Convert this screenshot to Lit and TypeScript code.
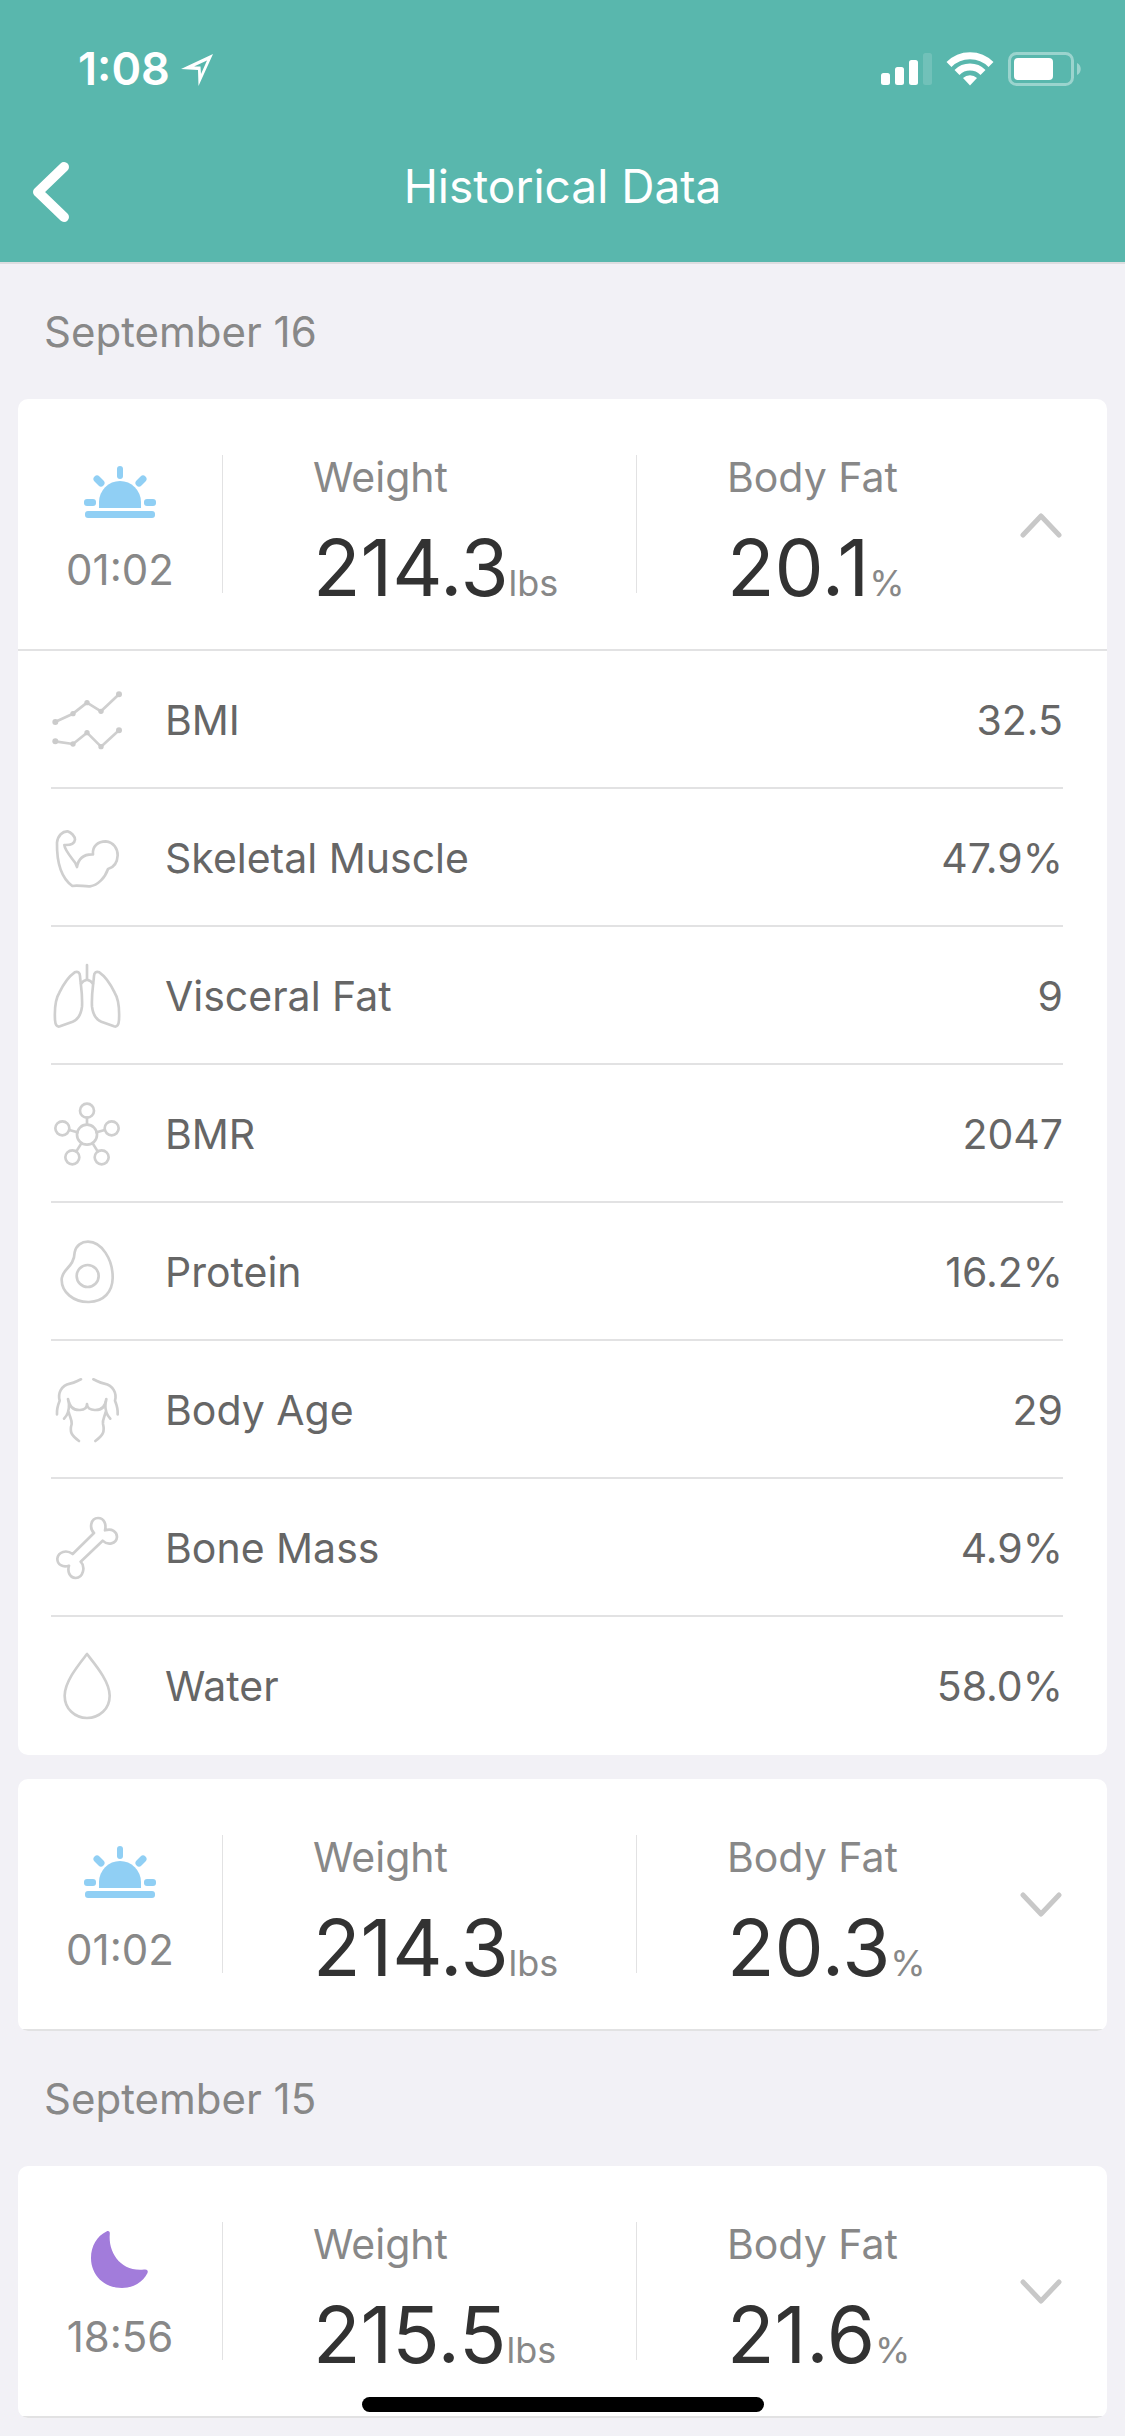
import { LitElement, html, svg, css, nothing, type SVGTemplateResult } from "lit";
import { customElement, property, state } from "lit/decorators.js";

interface Detail {
  icon: string;
  label: string;
  value: string;
}

interface Reading {
  time: string;
  period: "morning" | "night";
  weight: string;
  fat: string;
  expanded?: boolean;
  details: Detail[];
}

interface Day {
  date: string;
  readings: Reading[];
}

const DAYS: Day[] = [
  {
    date: "September 16",
    readings: [
      {
        time: "01:02",
        period: "morning",
        weight: "214.3",
        fat: "20.1",
        expanded: true,
        details: [
          { icon: "bmi", label: "BMI", value: "32.5" },
          { icon: "muscle", label: "Skeletal Muscle", value: "47.9%" },
          { icon: "lungs", label: "Visceral Fat", value: "9" },
          { icon: "bmr", label: "BMR", value: "2047" },
          { icon: "protein", label: "Protein", value: "16.2%" },
          { icon: "torso", label: "Body Age", value: "29" },
          { icon: "bone", label: "Bone Mass", value: "4.9%" },
          { icon: "water", label: "Water", value: "58.0%" },
        ],
      },
      { time: "01:02", period: "morning", weight: "214.3", fat: "20.3", details: [] },
    ],
  },
  {
    date: "September 15",
    readings: [{ time: "18:56", period: "night", weight: "215.5", fat: "21.6", details: [] }],
  },
];

const ICONS: Record<string, { box: string; art: SVGTemplateResult }> = {
  bmi: {
    box: "33 39 216 216",
    art: svg`
      <path d="M45 156 L99 131 L141 98 L183 124 L237 73 M45 214 L99 222 L141 188 L183 230 L237 181"/>
      <g class="dots">
        <circle cx="46" cy="156" r="9"/><circle cx="99" cy="131" r="8"/><circle cx="141" cy="98" r="8"/>
        <circle cx="183" cy="124" r="8"/><circle cx="237" cy="73" r="9"/>
        <circle cx="46" cy="214" r="9"/><circle cx="99" cy="222" r="8"/><circle cx="141" cy="188" r="8"/>
        <circle cx="183" cy="230" r="8"/><circle cx="237" cy="181" r="9"/>
      </g>`,
  },
  muscle: {
    box: "33 453 216 216",
    art: svg`<path d="M97 648 C62 622 50 575 51 518 C53 497 68 483 83 484 C93 486 105 499 105 509 C104 518 94 526 73 525 C74 540 92 560 106 579 L111 591 C115 566 130 552 159 553 C156 528 175 514 197 514 C222 516 233 538 233 556 C232 576 222 592 204 597 C195 624 173 646 150 649 C132 650 112 644 97 648 Z"/>`,
  },
  lungs: {
    box: "33 57 216 216",
    art: svg`
      <path d="M141 75 V119 M123 131 C127 125 133 121 141 119 C149 121 155 125 159 131"/>
      <path d="M104 97 C113 93 120 98 120 108 C122 135 128 160 126 200 C123 225 115 238 98 245 L60 259 C50 262 46 254 45 240 C43 200 47 175 58 158 C70 133 88 108 104 97 Z"/>
      <path d="M178 97 C169 93 162 98 162 108 C160 135 154 160 156 200 C159 225 167 238 184 245 L222 259 C232 262 236 254 237 240 C239 200 235 175 224 158 C212 133 194 108 178 97 Z"/>`,
  },
  bmr: {
    box: "33 471 216 216",
    art: svg`
      <circle cx="141" cy="584" r="30"/>
      <circle cx="141" cy="512" r="21"/><circle cx="67" cy="565" r="21"/><circle cx="215" cy="565" r="21"/>
      <circle cx="97" cy="652" r="21"/><circle cx="185" cy="652" r="21"/>
      <path d="M141 533 V554 M88 570 L112 577 M194 570 L170 577 M109 634 L124 610 M173 634 L158 610"/>`,
  },
  protein: {
    box: "33 45 216 216",
    art: svg`
      <path d="M104 97 C108 76 125 65 144 65 C185 65 219 118 218 175 C217 215 192 245 147 246 C100 247 65 216 65 180 C65 145 102 145 104 97 Z"/>
      <circle cx="143" cy="168" r="33"/>`,
  },
  torso: {
    box: "33 459 216 216",
    art: svg`
      <path d="M123 478 C109 484 105 488 90 491 C63 497 53 520 59 542 C54 554 50 566 51 583"/>
      <path d="M160 478 C174 484 178 488 193 491 C220 497 231 520 225 542 C230 554 234 566 233 583"/>
      <path d="M84 537 C88 562 102 571 120 570 C132 570 141 564 141 552 C141 564 151 570 164 570 C182 571 196 562 199 537"/>
      <path d="M87 548 C88 570 84 585 72 596 M86 576 C89 590 96 598 95 612 C88 636 94 646 117 663"/>
      <path d="M196 548 C195 570 199 585 211 596 M197 576 C194 590 187 598 189 612 C195 636 189 646 166 663"/>`,
  },
  bone: {
    box: "33 93 216 216",
    art: svg`<path d="M98 222 L162 159 C147 145 152 114 174 114 C194 114 199 135 195 151 C216 144 231 155 231 171 C229 192 203 197 188 182 L122 245 C137 260 130 293 107 294 C87 292 82 273 87 257 C68 263 52 254 52 236 C55 215 79 208 98 222 Z"/>`,
  },
  water: {
    box: "33 507 216 216",
    art: svg`<path d="M141 522 C117 553 74 604 74 647 C74 687 105 714 141 714 C178 714 209 687 209 647 C209 604 165 553 141 522 Z"/>`,
  },
};

const morningIcon = html`
  <svg class="period" viewBox="0 0 72 60" aria-hidden="true">
    <g fill="#90cff4">
      <path d="M15 46 V40 A21 21 0 0 1 57 40 V46 Z" />
      <rect x="1" y="49" width="70" height="7" rx="3" />
      <rect x="0" y="37" width="12" height="7" rx="3" />
      <rect x="60" y="37" width="12" height="7" rx="3" />
      <rect x="33" y="4" width="6" height="13" rx="3" />
    </g>
    <path d="M13 17 L17 21 M59 17 L55 21" stroke="#90cff4" stroke-width="7" stroke-linecap="round" />
  </svg>
`;

const nightIcon = html`
  <svg class="period" viewBox="0 0 72 60" aria-hidden="true">
    <path
      fill="#a27cdb"
      d="M22.500 2.500 C24.500 1.500 26 2.500 25.800 4.500 C24 24 37 43 60 40.500 C63 40 64.500 41.500 63.500 44 C59 53 49 59 38 59 C20 59 7 46 7 29 C7 17 13 7 22.500 2.500 Z"
    />
  </svg>
`;

@customElement("history-card")
class HistoryCard extends LitElement {
  @property({ attribute: false }) reading!: Reading;
  @state() private open = false;

  static styles = css`
    :host {
      display: block;
      overflow: hidden;
      border-radius: 10px;
      background: #fff;
      color: #888;
    }
    .head {
      display: grid;
      grid-template-columns: 204px 1px minmax(0, 69fr) 1px minmax(0, 64fr) 87px;
      height: 250px;
      border-bottom: 2px solid #e2e2e3;
    }
    .when {
      display: flex;
      flex-direction: column;
      align-items: center;
      gap: 24px;
      padding-top: 63px;
      font-size: 42px;
      line-height: 48px;
    }
    .period {
      width: 72px;
      height: 60px;
    }
    .rule {
      height: 138px;
      align-self: center;
      background: #e2e2e3;
    }
    .metric {
      display: flex;
      flex-direction: column;
      gap: 22px;
      padding: 57px 0 0 90px;
      white-space: nowrap;
    }
    .name {
      line-height: 42px;
    }
    .figure {
      line-height: 96px;
    }
    .number {
      font-size: 78px;
      color: #323232;
    }
    .unit {
      font-size: 36px;
    }
    .toggle {
      display: flex;
      align-items: center;
      padding: 2px 0 0;
      border: 0;
      background: none;
      cursor: pointer;
    }
    .chevron {
      width: 42px;
      height: 26px;
      fill: none;
      stroke: #c8c8c8;
      stroke-width: 5;
      stroke-linecap: round;
      stroke-linejoin: round;
    }
    .details {
      width: calc(100% - 77px);
      margin: 0 44px 0 33px;
      border-spacing: 0;
      color: #666;
    }
    .details th,
    .details td {
      box-sizing: border-box;
      height: 138px;
      padding: 2px 0 0;
      border-bottom: 2px solid #e2e2e3;
      font-weight: 400;
      text-align: left;
      vertical-align: middle;
    }
    .details tr:last-child > * {
      border-bottom-color: transparent;
    }
    .details .mark {
      width: 114px;
      padding: 0;
    }
    .details .value {
      text-align: right;
    }
    .icon {
      display: block;
      width: 72px;
      height: 72px;
      fill: none;
      stroke: #cfcfcf;
      stroke-width: 8;
      stroke-linecap: round;
      stroke-linejoin: round;
    }
    .dots {
      fill: #cbcbcb;
      stroke: none;
    }
  `;

  willUpdate(changed: Map<string, unknown>) {
    if (changed.has("reading")) this.open = Boolean(this.reading.expanded);
  }

  private metric(name: string, value: string, unit: string) {
    return html`
      <div class="metric">
        <span class="name">${name}</span>
        <span class="figure"><span class="number">${value}</span><span class="unit">${unit}</span></span>
      </div>
    `;
  }

  render() {
    const { time, period, weight, fat, details } = this.reading;
    return html`
      <div class="head">
        <div class="when">
          ${period === "morning" ? morningIcon : nightIcon}
          <time>${time}</time>
        </div>
        <span class="rule"></span>
        ${this.metric("Weight", weight, "lbs")}
        <span class="rule"></span>
        ${this.metric("Body Fat", fat, "%")}
        <button
          class="toggle"
          type="button"
          aria-label="Details"
          aria-expanded=${this.open ? "true" : "false"}
          @click=${() => (this.open = !this.open)}
        >
          <svg class="chevron" viewBox="0 0 42 26" aria-hidden="true">
            <path d=${this.open ? "M3 23 L21 4 L39 23" : "M3 3 L21 22 L39 3"} />
          </svg>
        </button>
      </div>
      ${this.open && details.length
        ? html`
            <table class="details">
              <tbody>
                ${details.map(
                  (d) => html`
                    <tr>
                      <td class="mark">
                        <svg class="icon" viewBox=${ICONS[d.icon].box} aria-hidden="true">${ICONS[d.icon].art}</svg>
                      </td>
                      <th scope="row">${d.label}</th>
                      <td class="value">${d.value}</td>
                    </tr>
                  `
                )}
              </tbody>
            </table>
          `
        : nothing}
    `;
  }
}

@customElement("app-root")
class AppRoot extends LitElement {
  static styles = css`
    :host {
      display: block;
      min-height: 100vh;
      background: #f2f1f6;
      font-family: Inter, "Liberation Sans", sans-serif;
      font-size: 41px;
      line-height: 48px;
    }
    .top {
      background: #59b7ad;
      border-bottom: 2px solid #dddde0;
      color: #fff;
    }
    .status {
      display: flex;
      align-items: center;
      justify-content: space-between;
      padding: 45px 44px 0 78px;
    }
    .clock {
      display: flex;
      align-items: center;
      gap: 11px;
      font-size: 45px;
      font-weight: 600;
    }
    .arrow {
      width: 32px;
      height: 34px;
    }
    .signals {
      width: 200px;
      height: 36px;
    }
    .nav {
      display: grid;
      grid-template-columns: 80px 1fr 80px;
      align-items: center;
      height: 120px;
      padding: 33px 24px 16px;
    }
    .back {
      display: flex;
      align-items: center;
      height: 96px;
      padding: 12px 8px 0;
      border: 0;
      background: none;
      cursor: pointer;
    }
    .back svg {
      width: 38px;
      height: 62px;
    }
    .title {
      margin: 0;
      font-size: 46px;
      font-weight: 400;
      text-align: center;
    }
    .day {
      padding: 0 18px;
    }
    .date {
      margin: 0;
      padding: 0 26px;
      font-size: 42px;
      font-weight: 400;
      line-height: 135px;
      color: #888;
    }
    .cards {
      display: grid;
      gap: 24px;
    }
    .home {
      position: fixed;
      bottom: 24px;
      left: 50%;
      width: 402px;
      height: 15px;
      margin-left: -201px;
      border-radius: 8px;
      background: #000;
    }
  `;

  render() {
    return html`
      <header class="top">
        <div class="status">
          <div class="clock">
            <span>1:08</span>
            <svg class="arrow" viewBox="0 0 32 34" aria-hidden="true">
              <path
                fill="#fff"
                fill-rule="evenodd"
                d="M0 17 L32 2 L17.500 34 L17 18 Z M13 14.500 L19.500 14.500 L20 22 L26 8.500 Z"
              />
            </svg>
          </div>
          <svg class="signals" viewBox="881 51 200 36" aria-hidden="true">
            <g fill="#fff">
              <rect x="881" y="73" width="9" height="12" rx="2.500" />
              <rect x="895" y="67" width="9" height="18" rx="2.500" />
              <rect x="909" y="60" width="9" height="25" rx="2.500" />
              <rect x="923" y="53" width="9" height="32" rx="2.500" opacity="0.15" />
              <path d="M970 85.500 L963 78 A10.500 10.500 0 0 1 977 78 Z" />
              <rect x="1014" y="58" width="39" height="22" rx="4" />
              <path d="M1077 63 C1082 65 1082 73 1077 75 Z" opacity="0.4" />
            </g>
            <g fill="none" stroke="#fff">
              <path d="M949 64.500 A29.500 29.500 0 0 1 991 64.500" stroke-width="7" />
              <path d="M957 72.500 A18.300 18.300 0 0 1 983 72.500" stroke-width="7" />
              <rect x="1009.500" y="53.500" width="63" height="31" rx="7" stroke-width="3" opacity="0.4" />
            </g>
          </svg>
        </div>
        <nav class="nav">
          <button class="back" type="button" aria-label="Back">
            <svg viewBox="0 0 38 62" aria-hidden="true">
              <path
                d="M32 6 L6 31 L32 56"
                fill="none"
                stroke="#fff"
                stroke-width="10"
                stroke-linecap="round"
                stroke-linejoin="round"
              />
            </svg>
          </button>
          <h1 class="title">Historical Data</h1>
        </nav>
      </header>
      <main>
        ${DAYS.map(
          (day) => html`
            <section class="day">
              <h2 class="date">${day.date}</h2>
              <div class="cards">
                ${day.readings.map((r) => html`<history-card .reading=${r}></history-card>`)}
              </div>
            </section>
          `
        )}
      </main>
      <div class="home"></div>
    `;
  }
}
